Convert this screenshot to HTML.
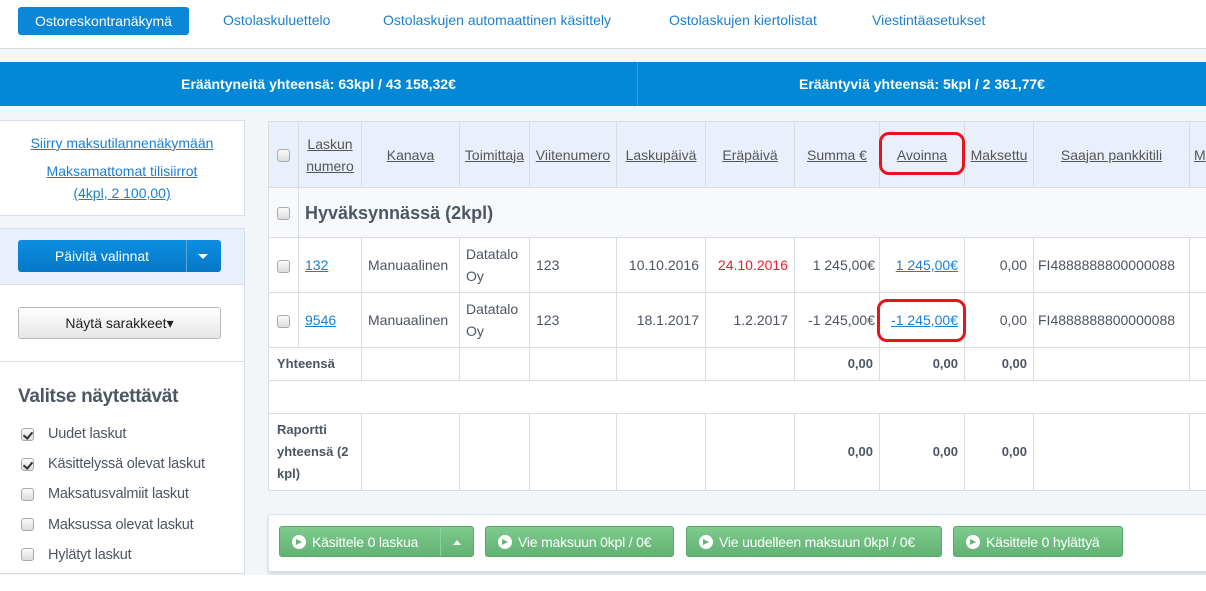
<!DOCTYPE html>
<html><head><meta charset="utf-8"><style>
*{box-sizing:border-box;margin:0;padding:0}
body{width:1206px;height:591px;overflow:hidden;background:#f3f6f9;font-family:"Liberation Sans",Arial,sans-serif;font-size:14px;color:#4d5560;position:relative}
.a{position:absolute}
a{color:#1b7fd1;text-decoration:underline}
.nav{left:0;top:0;width:1206px;height:49px;background:#fff;border-bottom:1px solid #d5dce3}
.nav span{position:absolute;top:12px;color:#1b7fd1;font-size:14px}
.tab{left:18px;top:7px !important;width:171px;height:28px;background:#0a87d6;border-radius:3px;color:#fff !important;text-align:center;line-height:28px}
.blue{left:0;top:62px;width:1206px;height:44px;background:#0288d6;color:#fff;font-weight:bold;font-size:14px;line-height:44px;text-align:center}
.cb{display:inline-block;width:13px;height:13px;border:1px solid #aaa;border-radius:3px;background:linear-gradient(#fafafa,#ddd);vertical-align:middle;position:relative}
.cb.on::after{content:"";position:absolute;left:3px;top:1px;width:4px;height:7px;border-right:2px solid #333;border-bottom:2px solid #333;transform:rotate(40deg)}
.list div{height:30.2px;display:flex;align-items:center}
.list .cb{margin-right:14px}
table{border-collapse:collapse;table-layout:fixed;position:absolute;left:268px;top:121px;width:938px}
td,th{border:1px solid #dadde0;padding:0 6px;vertical-align:middle;line-height:22px}
th{font-weight:normal;background:#e9f0fc;height:66px;text-align:center}
th u{color:#555}
.r{text-align:right}
.g{background:#f7f9fd;height:50px}
.wb td{background:#fff}
.bold td{font-weight:bold;font-size:13px}
.btn{position:absolute;height:31px;border-radius:3px;background:linear-gradient(#7dcb8d,#62b273);color:#fff;font-size:14px;line-height:31px;padding-left:32px;border:1px solid #5aa96a;letter-spacing:-0.2px}
.btn::before{content:"";position:absolute;left:12px;top:8px;width:14px;height:14px;border-radius:50%;background:#fff}
.btn::after{content:"";position:absolute;left:16px;top:12px;border-left:6px solid #67b678;border-top:3px solid transparent;border-bottom:3px solid transparent}
</style></head><body>
<div class="a nav">
<span class="a tab">Ostoreskontranäkymä</span>
<span style="left:223px">Ostolaskuluettelo</span>
<span style="left:383px">Ostolaskujen automaattinen käsittely</span>
<span style="left:669px">Ostolaskujen kiertolistat</span>
<span style="left:872px">Viestintäasetukset</span>
</div>
<div class="a blue" style="width:637px">Erääntyneitä yhteensä: 63kpl / 43 158,32€</div>
<div class="a blue" style="left:637px;width:569px;border-left:1px solid #2a9ee0">Erääntyviä yhteensä: 5kpl / 2 361,77€</div>

<div class="a" style="left:0;top:120px;width:245px;height:96px;background:#fff;border:1px solid #d5dde6;border-left:0;text-align:center;line-height:22px;padding-top:11px">
<a>Siirry maksutilannenäkymään</a><br><div style="height:6px"></div><a>Maksamattomat tilisiirrot<br>(4kpl, 2 100,00)</a></div>
<div class="a" style="left:0;top:228px;width:245px;height:346px;background:#fff;border:1px solid #d5dde6;border-left:0"></div>
<div class="a" style="left:0;top:228px;width:245px;height:57px;background:#e9f0fb;border:1px solid #d5dde6;border-left:0"></div>
<div class="a" style="left:18px;top:240px;width:203px;height:32px;background:linear-gradient(#0d8fe0,#0577c6);border-radius:3px;color:#fff;line-height:32px">
<span class="a" style="left:0;width:168px;text-align:center">Päivitä valinnat</span>
<span class="a" style="left:168px;top:0;height:32px;border-left:1px solid #5aa6dd"></span>
<span class="a" style="left:180px;top:14px;border-top:5px solid #fff;border-left:5px solid transparent;border-right:5px solid transparent"></span></div>
<div class="a" style="left:18px;top:307px;width:203px;height:32px;background:linear-gradient(#fff,#e6e6e6);border:1px solid #bbb;border-radius:3px;color:#222;text-align:center;line-height:30px">Näytä sarakkeet▾</div>
<div class="a" style="left:0;top:361px;width:244px;border-top:1px solid #d5dde6"></div>
<div class="a" style="left:18px;top:386px;font-size:19px;font-weight:bold;color:#4d5764;letter-spacing:-0.3px">Valitse näytettävät</div>
<div class="a list" style="left:21px;top:419px;font-size:14.5px;letter-spacing:-0.2px">
<div><span class="cb on"></span>Uudet laskut</div>
<div><span class="cb on"></span>Käsittelyssä olevat laskut</div>
<div><span class="cb"></span>Maksatusvalmiit laskut</div>
<div><span class="cb"></span>Maksussa olevat laskut</div>
<div><span class="cb"></span>Hylätyt laskut</div>
</div>

<div class="a" style="left:268px;top:121px;width:938px;height:370px;background:#fff"></div>
<table>
<colgroup><col style="width:30px"><col style="width:63px"><col style="width:98px"><col style="width:70px"><col style="width:87px"><col style="width:89px"><col style="width:89px"><col style="width:85px"><col style="width:85px"><col style="width:69px"><col style="width:156px"><col style="width:17px"></colgroup>
<tr><th style="padding:0"><span class="cb"></span></th><th style="padding:0"><u>Laskun numero</u></th><th><u>Kanava</u></th><th style="padding:0"><u>Toimittaja</u></th><th style="padding:0"><u>Viitenumero</u></th><th><u>Laskupäivä</u></th><th><u>Eräpäivä</u></th><th style="padding:0"><u>Summa €</u></th><th><u>Avoinna</u></th><th style="padding:0"><u>Maksettu</u></th><th><u>Saajan pankkitili</u></th><th style="padding:0 0 0 4px;overflow:hidden;text-align:left"><u>M</u></th></tr>
<tr class="g"><td class="g" style="padding:0 0 0 8px"><span class="cb"></span></td><td colspan="11" class="g" style="font-size:18px;font-weight:bold;color:#4d5764;border-left:1px solid #dadde0">Hyväksynnässä (2kpl)</td></tr>
<tr class="wb" style="height:55px"><td style="padding:0 0 0 8px"><span class="cb"></span></td><td><a>132</a></td><td>Manuaalinen</td><td>Datatalo Oy</td><td>123</td><td class="r">10.10.2016</td><td class="r" style="color:#e0242f">24.10.2016</td><td class="r" style="padding:0 4px">1 245,00€</td><td class="r"><a>1 245,00€</a></td><td class="r">0,00</td><td style="padding:0 4px">FI4888888800000088</td><td></td></tr>
<tr class="wb" style="height:55px"><td style="padding:0 0 0 8px"><span class="cb"></span></td><td><a>9546</a></td><td>Manuaalinen</td><td>Datatalo Oy</td><td>123</td><td class="r">18.1.2017</td><td class="r">1.2.2017</td><td class="r" style="padding:0 4px">-1 245,00€</td><td class="r"><a>-1 245,00€</a></td><td class="r">0,00</td><td style="padding:0 4px">FI4888888800000088</td><td></td></tr>
<tr class="wb bold" style="height:33px"><td colspan="2" style="padding:0 8px">Yhteensä</td><td></td><td></td><td></td><td></td><td></td><td class="r">0,00</td><td class="r">0,00</td><td class="r">0,00</td><td></td><td></td></tr>
<tr class="wb" style="height:33px"><td colspan="12"></td></tr>
<tr class="wb bold" style="height:77px"><td colspan="2" style="padding:0 8px">Raportti yhteensä (2 kpl)</td><td></td><td></td><td></td><td></td><td></td><td class="r">0,00</td><td class="r">0,00</td><td class="r">0,00</td><td></td><td></td></tr>
</table>
<div class="a" style="left:879px;top:132px;width:86px;height:43px;border:3px solid #e8141c;border-radius:10px"></div>
<div class="a" style="left:877px;top:299px;width:89px;height:43px;border:3px solid #e8141c;border-radius:10px"></div>

<div class="a" style="left:268px;top:514px;width:940px;height:58px;background:#fff;border:1px solid #dde3ea;border-radius:3px;box-shadow:0 2px 3px rgba(0,0,0,.15)"></div>
<div class="btn" style="left:279px;top:526px;width:195px">Käsittele 0 laskua<span class="a" style="left:160px;top:0;height:29px;border-left:1px solid #8fd09d"></span><span class="a" style="left:173px;top:13px;border-bottom:5px solid #fff;border-left:4px solid transparent;border-right:4px solid transparent"></span></div>
<div class="btn" style="left:485px;top:526px;width:189px">Vie maksuun 0kpl / 0€</div>
<div class="btn" style="left:686px;top:526px;width:256px">Vie uudelleen maksuun 0kpl / 0€</div>
<div class="btn" style="left:953px;top:526px;width:170px">Käsittele 0 hylättyä</div>
<div class="a" style="left:0;top:575px;width:1206px;height:16px;background:#fff"></div>
</body></html>
